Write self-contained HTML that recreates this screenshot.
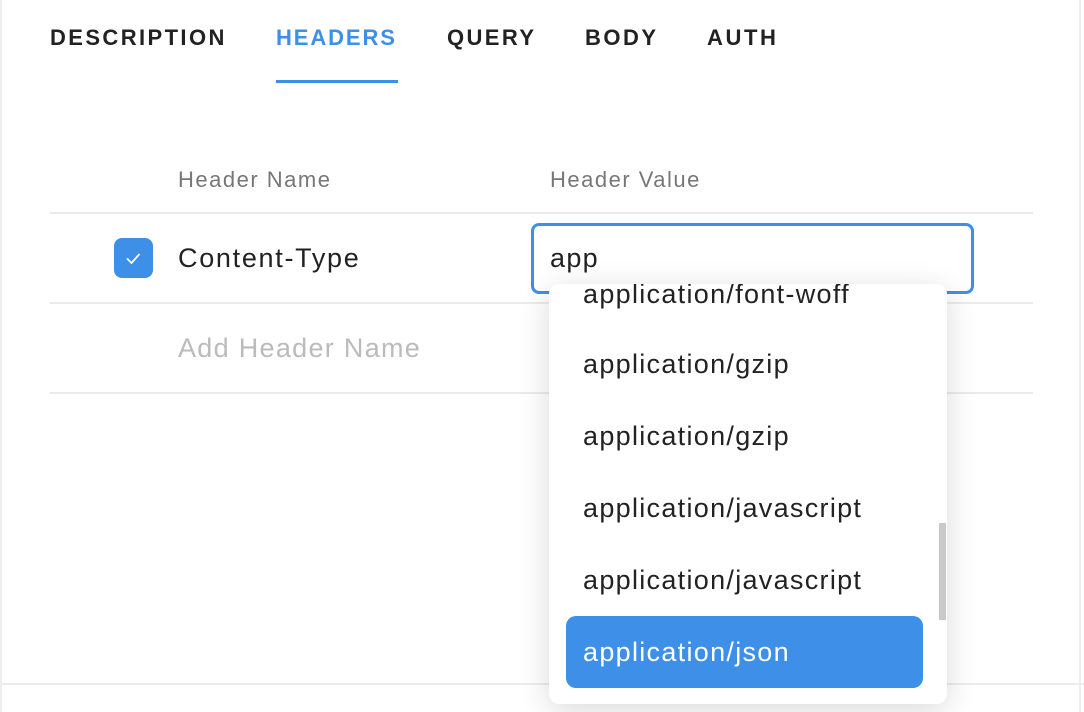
<!DOCTYPE html>
<html><head><style>
body{margin:0;width:1084px;height:712px;background:#fff;position:relative;overflow:hidden;font-family:"Liberation Sans",sans-serif;}
.a{position:absolute}
.tab{position:absolute;top:24px;font-size:22px;font-weight:bold;letter-spacing:2.4px;color:#222;line-height:28px}
.hl{position:absolute;left:50px;width:983px;height:2px;background:#ebebeb}
.it{position:absolute;left:583px;font-size:27px;letter-spacing:1.3px;color:#222;line-height:30px}
.t{font-size:27px;letter-spacing:1.3px;line-height:30px}
.lb{font-size:22px;letter-spacing:1.5px;color:#777;line-height:26px}
</style></head><body>
<div class="a" style="left:0;top:0;width:2px;height:712px;background:#eee"></div>
<div class="a" style="left:1079px;top:0;width:2px;height:712px;background:#eee"></div>
<div class="a" style="left:0;top:683px;width:1084px;height:2px;background:#ebebeb"></div>
<div class="tab" style="left:50px">DESCRIPTION</div>
<div class="tab" style="left:276px;color:#3d8fe8;letter-spacing:1.9px">HEADERS</div>
<div class="tab" style="left:447px;letter-spacing:2.4px">QUERY</div>
<div class="tab" style="left:585px;letter-spacing:2.5px">BODY</div>
<div class="tab" style="left:707px;letter-spacing:2.6px">AUTH</div>
<div class="a" style="left:276px;top:80px;width:122px;height:3px;background:#3d8fe8"></div>
<div class="a lb" style="left:178px;top:167px">Header Name</div>
<div class="a lb" style="left:550px;top:167px">Header Value</div>
<div class="hl" style="top:212px"></div>
<div class="hl" style="top:302px"></div>
<div class="hl" style="top:392px"></div>
<div class="a" style="left:114px;top:238px;width:39px;height:40px;border-radius:8px;background:#3d8fe8">
<svg width="39" height="40"><path d="M13 20.5l4.5 4.5 8-9" stroke="#fff" stroke-width="1.8" fill="none"/></svg></div>
<div class="a t" style="left:178px;top:243px;color:#222;letter-spacing:1.7px">Content-Type</div>
<div class="a t" style="left:178px;top:333px;color:#bbb">Add Header Name</div>
<div class="a" style="left:531px;top:223px;width:437px;height:65px;border:3px solid #3d8fe8;border-radius:8px;background:#fff"></div>
<div class="a t" style="left:550px;top:243px;color:#222">app</div>
<div class="a" style="left:549px;top:284px;width:398px;height:420px;border-radius:10px;background:#fff;box-shadow:0 6px 30px rgba(0,0,0,0.15);overflow:hidden">
<div class="it" style="left:34px;top:-5px">application/font-woff</div>
<div class="it" style="left:34px;top:65px">application/gzip</div>
<div class="it" style="left:34px;top:137px">application/gzip</div>
<div class="it" style="left:34px;top:209px">application/javascript</div>
<div class="it" style="left:34px;top:281px">application/javascript</div>
<div class="a" style="left:17px;top:332px;width:357px;height:72px;border-radius:10px;background:#3d8fe8"></div>
<div class="it" style="left:34px;top:353px;color:#fff">application/json</div>
<div class="a" style="left:390px;top:239px;width:7px;height:97px;background:#c9c9c9"></div>
</div>
</body></html>
